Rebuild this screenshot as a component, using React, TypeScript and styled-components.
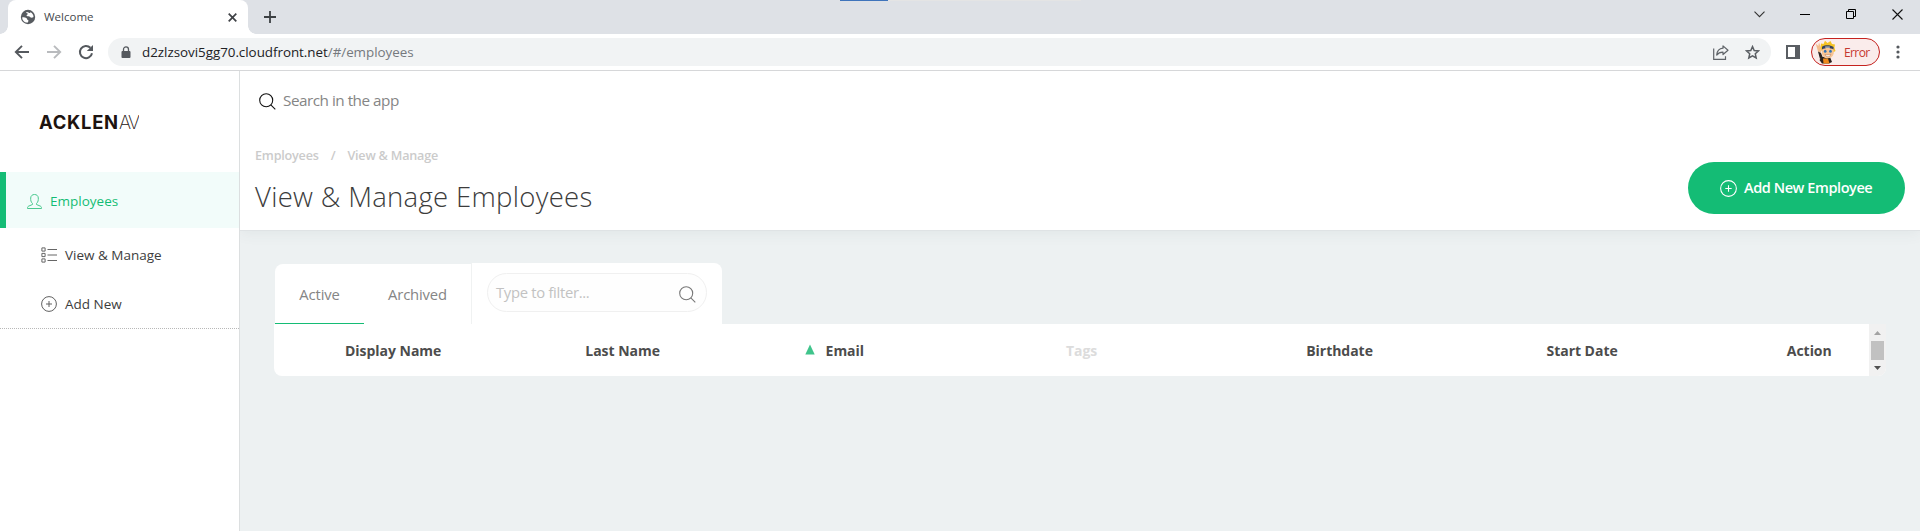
import React from 'react';
import styled, { createGlobalStyle } from 'styled-components';

const GlobalStyle = createGlobalStyle`
  *, *::before, *::after { box-sizing: border-box; }
  body {
    margin: 0;
    background: #fff;
    font-family: 'Open Sans', 'Noto Sans', sans-serif;
    overflow: hidden;
  }
  svg { display: block; flex: none; }
`;

const Window = styled.div`
  display: flex;
  flex-direction: column;
  height: 531px;
  width: 1920px;
`;

/* ---------- browser chrome ---------- */

const TabStrip = styled.div`
  display: flex;
  height: 34px;
  flex: none;
  background: #dee1e6;
  padding-left: 8px;
  position: relative;
`;

const LoadingBar = styled.div`
  position: absolute;
  top: 0;
  left: 840px;
  width: 241px;
  height: 1px;
  background: linear-gradient(to right, #3f74bb 48px, #e4e4e4 48px);
`;

const BrowserTab = styled.div`
  display: flex;
  align-items: center;
  width: 240px;
  padding: 0 11px 0 12px;
  background: #fff;
  border-radius: 8px 8px 0 0;
  position: relative;
  &::before,
  &::after {
    content: '';
    position: absolute;
    bottom: 0;
    width: 8px;
    height: 8px;
  }
  &::before {
    left: -8px;
    background: radial-gradient(circle at 0 0, transparent 7.5px, #fff 8px);
  }
  &::after {
    right: -8px;
    background: radial-gradient(circle at 100% 0, transparent 7.5px, #fff 8px);
  }
`;

const TabTitle = styled.span`
  flex: 1;
  margin-left: 8px;
  font-size: 11.5px;
  line-height: 16px;
  color: #45494d;
`;

const NewTab = styled.div`
  display: flex;
  align-items: center;
  margin-left: 16px;
`;

const WindowControls = styled.div`
  display: flex;
  align-items: flex-start;
  margin-left: auto;
`;

const WindowControl = styled.div`
  display: flex;
  width: 46px;
  height: 28px;
  align-items: center;
  justify-content: center;
`;

const Toolbar = styled.div`
  display: flex;
  align-items: center;
  height: 37px;
  flex: none;
  border-bottom: 1px solid #d6d7d9;
  padding: 0 16px 0 14px;
`;

const NavButtons = styled.div`
  display: flex;
  gap: 16px;
  width: 94px;
`;

const AddressBar = styled.div`
  display: flex;
  align-items: center;
  width: 1663px;
  height: 28px;
  padding: 0 11px 0 13px;
  border-radius: 14px;
  background: #f1f3f4;
`;

const Url = styled.span`
  flex: 1;
  margin-left: 11px;
  font-size: 13.4px;
  line-height: 20px;
  letter-spacing: -0.03px;
  color: #202124;
`;

const UrlPath = styled.span`
  color: #75797e;
`;

const AddressActions = styled.div`
  display: flex;
  gap: 16px;
  align-items: center;
`;

const SidePanelIcon = styled.div`
  width: 14px;
  height: 14px;
  margin-left: 15px;
  border: 2px solid #5a5e63;
  border-right-width: 5px;
`;

const Profile = styled.div`
  display: flex;
  align-items: center;
  width: 69px;
  height: 28px;
  margin-left: 11px;
  padding-left: 3px;
  border: 1px solid #c5221f;
  border-radius: 14px;
  background: #faeceb;
  font-size: 12px;
  letter-spacing: -0.6px;
  color: #c5382f;
`;

const ProfileLabel = styled.span`
  margin-left: 7px;
`;

const MoreMenu = styled.div`
  margin-left: 16px;
`;

/* ---------- application ---------- */

const Page = styled.div`
  display: flex;
  flex: 1;
  min-height: 0;
`;

const Sidebar = styled.aside`
  width: 240px;
  flex: none;
  background: #fff;
  border-right: 1px solid #dcdfe0;
`;

const Logo = styled.div`
  width: 139px;
  height: 101px;
  padding: 40px 0 0 39px;
  overflow: hidden;
  white-space: nowrap;
  font-family: 'Inter', sans-serif;
  font-size: 18.4px;
  line-height: 22px;
  font-weight: 700;
  color: #1d1310;
`;

const LogoBold = styled.span`
  letter-spacing: 0.75px;
`;

const LogoThin = styled.span`
  font-weight: 200;
  letter-spacing: -1.6px;
`;

const SectionItem = styled.div`
  display: flex;
  align-items: center;
  gap: 8px;
  height: 56px;
  padding: 3px 0 0 21px;
  border-left: 6px solid #14bc75;
  background: #f2fcfa;
  font-size: 13.5px;
  line-height: 20px;
  color: #14bc75;
`;

const SectionLabel = styled.span`
  padding-bottom: 2px;
`;

const SubMenu = styled.nav`
  display: flex;
  flex-direction: column;
  height: 101px;
  padding-top: 2px;
  border-bottom: 1px dotted #b8b8b8;
`;

const SubMenuItem = styled.div`
  display: flex;
  align-items: center;
  gap: 8px;
  height: 50px;
  padding-left: 41px;
  font-size: 13.5px;
  line-height: 20px;
  color: #3d3d3d;
`;

const Content = styled.main`
  flex: 1;
  display: flex;
  flex-direction: column;
  background: #edf1f2;
`;

const Header = styled.header`
  height: 160px;
  background: #fff;
  border-bottom: 1px solid #dfe3e5;
  box-shadow: 0 2px 14px rgba(60, 80, 85, 0.07);
  clip-path: inset(0 0 -20px 0);
`;

const AppSearch = styled.div`
  display: flex;
  align-items: center;
  height: 69px;
  padding: 0 0 9px 19px;
  gap: 7px;
  font-size: 15.3px;
  line-height: 20px;
  letter-spacing: -0.5px;
  color: #858585;
`;

const SearchPlaceholder = styled.span`
  padding-bottom: 3px;
`;

const TitleRow = styled.div`
  display: flex;
  justify-content: space-between;
  padding: 0 15px;
`;

const Breadcrumb = styled.div`
  display: flex;
  gap: 12px;
  padding-top: 6px;
  font-size: 12.6px;
  line-height: 20px;
  font-weight: 600;
  letter-spacing: -0.2px;
  color: #cbcbcb;
`;

const Title = styled.h1`
  margin: 11px 0 0;
  font-size: 27.5px;
  line-height: 40px;
  font-weight: 300;
  letter-spacing: 0.31px;
  color: #3c3c3c;
`;

const AddButton = styled.button`
  display: flex;
  align-items: center;
  gap: 7px;
  width: 217px;
  height: 52px;
  margin-top: 22px;
  padding: 0 0 0 32px;
  border: 0;
  border-radius: 26px;
  background: #14bc75;
  font: 600 14.5px/20px 'Open Sans', sans-serif;
  letter-spacing: -0.42px;
  white-space: nowrap;
  color: #fff;
`;

const ListPanel = styled.section`
  padding: 32px 34px 0 34px;
`;

const ListToolbar = styled.div`
  display: flex;
  height: 61px;
  align-items: flex-end;
  padding-left: 1px;
`;

const Tabs = styled.div`
  display: flex;
  width: 196px;
  height: 60px;
  background: #fff;
  border-radius: 8px 0 0 0;
`;

const Tab = styled.div<{ $active?: boolean; $width: number }>`
  width: ${(p) => p.$width}px;
  padding-top: 20px;
  border-bottom: 1px solid ${(p) => (p.$active ? '#14bc75' : 'transparent')};
  text-align: center;
  font-size: 14.8px;
  line-height: 20px;
  letter-spacing: -0.15px;
  color: #858585;
`;

const FilterArea = styled.div`
  width: 251px;
  height: 61px;
  padding: 10px 15px 0;
  border-left: 1px solid #f0f2f2;
  border-radius: 0 8px 0 0;
  background: #fff;
`;

const FilterBox = styled.div`
  display: flex;
  justify-content: space-between;
  width: 220px;
  height: 39px;
  padding: 0 10px 0 8px;
  border: 1px solid #f0f0f0;
  border-radius: 20px;
  background: #fefefe;
`;

const FilterText = styled.span`
  padding-top: 8px;
  font-size: 14.8px;
  line-height: 20px;
  letter-spacing: -0.3px;
  color: #c2c2c2;
`;

const FilterIcon = styled.span`
  padding-top: 12px;
`;

const TableFrame = styled.div`
  display: flex;
  width: 1612px;
  height: 52px;
  border-radius: 0 0 8px 8px;
  overflow: hidden;
  background: #fff;
`;

const TableHead = styled.div`
  display: grid;
  grid-template-columns: repeat(6, 240.3px) 1fr;
  align-items: center;
  flex: 1;
  padding: 2px 0 0 71px;
`;

const HeadCell = styled.div<{ $muted?: boolean }>`
  font-size: 14px;
  line-height: 20px;
  font-weight: 700;
  letter-spacing: -0.03px;
  color: ${(p) => (p.$muted ? '#dcdcdc' : '#4c4c4c')};
  position: relative;
`;

const SortMark = styled.span`
  position: absolute;
  left: -21px;
  top: 3px;
`;

const Scrollbar = styled.div`
  display: flex;
  flex-direction: column;
  align-items: center;
  width: 17px;
  padding: 7px 0 5px;
  background: #f1f1f1;
`;

const Thumb = styled.div`
  width: 13px;
  height: 19px;
  margin: 6px 0;
  background: #c1c1c1;
`;

/* ---------- icons ---------- */

const SearchIcon = ({ color }: { color: string }) => (
  <svg width="17" height="17" viewBox="0 0 17 17" fill="none" stroke={color} strokeWidth="1.1">
    <circle cx="7.2" cy="7.2" r="6.5" />
    <path d="M11.8 11.8 16.3 16.3" />
  </svg>
);

const PlusCircle = ({ size, color }: { size: number; color: string }) => (
  <svg width={size} height={size} viewBox="0 0 16 16" fill="none" stroke={color}>
    <circle cx="8" cy="8" r="7.4" />
    <path d="M8 5v6M5 8h6" />
  </svg>
);

const GlobeIcon = () => (
  <svg width="16" height="16" viewBox="0 0 16 16">
    <circle cx="8" cy="8" r="7.2" fill="#575b60" />
    <path
      d="M2.2 8.4c1.5-.2 3.3.3 4.4.9.8.5.3 1.5 1.3 1.7.9.2.5 1.3 0 2.4-3.3.4-5.7-2-5.700-5ZM6.4 3c-.4 1 .4 1.300 1.200 1.500.6.3-.1 1.200-1 1.600-.3.9.6 1.200 1.800 1.200 1.600-.1 1.700 1.300 3.100 1.400.9 0 1.500-.5 2-.7.1-2-1.200-3.900-3-4.700-.3 1-1.500.9-1.900.2-.8-.5-1.500-.7-2.200-.5Z"
      fill="#fff"
    />
  </svg>
);

const Avatar = () => (
  <svg width="22" height="24" viewBox="0 0 22 24">
    <path d="M7 17h8l2 5-3 1.5H7L4.5 20Z" fill="#2b2320" />
    <path d="M8 18.5h5l1.500 5H8.500Z" fill="#ee8a1d" />
    <path d="M2 8 .7 3.500 3.300 6 4 2.500l1.500 4 1 4-1 2.500-2.500-1.500Z" fill="#f4bd8c" />
    <path d="M3 11.500 6 13l2 5-3 1Z" fill="#2b2320" />
    <path d="m5.500 8 .5-4.500L8.500 4 10 .7 12.500 3 15.500.9 17 4l3 .5-.6 3 1.100 3.500-2.500 1.500H7.500Z" fill="#f5c324" />
    <path d="M7 9c3-3 9-3 11.500-.5l.3 5c-1 3.500-3.500 4.800-6 4.800C9 18.300 7 16 6.800 13Z" fill="#f7c596" />
    <path d="M7 6.700c3.500-2 8-2 11.500.3v2.500C15 7.500 10.500 7.500 7 9.500Z" fill="#34405c" />
    <path d="M10.200 6.400h4.600v1.400h-4.600Z" fill="#b9c0ca" />
    <ellipse cx="10.2" cy="11.3" rx="1.3" ry="1.5" fill="#3173b8" />
    <ellipse cx="15.5" cy="11.3" rx="1.3" ry="1.5" fill="#3173b8" />
    <path d="M10 14.500c2 .6 4 .5 5.800-.3-.4 3-4.500 3.600-5.800.3Z" fill="#fff" stroke="#9c5130" strokeWidth=".4" />
  </svg>
);

const columns = ['Display Name', 'Last Name', 'Email', 'Tags', 'Birthdate', 'Start Date', 'Action'];

export default function App() {
  return (
    <Window>
      <GlobalStyle />
      <TabStrip>
        <LoadingBar />
        <BrowserTab>
          <GlobeIcon />
          <TabTitle>Welcome</TabTitle>
          <svg width="9" height="9" viewBox="0 0 9 9" stroke="#3f4246" strokeWidth="1.7">
            <path d="m.7.7 7.6 7.6M8.3.7.7 8.3" />
          </svg>
        </BrowserTab>
        <NewTab>
          <svg width="12" height="12" viewBox="0 0 12 12" stroke="#3c4043" strokeWidth="1.8">
            <path d="M6 0v12M0 6h12" />
          </svg>
        </NewTab>
        <WindowControls>
          <WindowControl>
            <svg width="11" height="7" viewBox="0 0 11 7" fill="none" stroke="#333" strokeWidth="1.1">
              <path d="m.5.7 5 5 5-5" />
            </svg>
          </WindowControl>
          <WindowControl>
            <svg width="10" height="1" viewBox="0 0 10 1">
              <path d="M0 0h10v1H0Z" />
            </svg>
          </WindowControl>
          <WindowControl>
            <svg width="10" height="10" viewBox="0 0 10 10" fill="none" stroke="#000">
              <path d="M.5 2.5h7v7h-7ZM2.5 2.5v-2h7v7h-2" />
            </svg>
          </WindowControl>
          <WindowControl>
            <svg width="11" height="11" viewBox="0 0 11 11" stroke="#111" strokeWidth="1.1">
              <path d="m.5.5 10 10M10.5.5l-10 10" />
            </svg>
          </WindowControl>
        </WindowControls>
      </TabStrip>

      <Toolbar>
        <NavButtons>
          <svg width="16" height="16" viewBox="0 0 16 16" fill="none" stroke="#55595e" strokeWidth="1.9">
            <path d="M15 8H2.5M8 1.800 1.800 8 8 14.200" />
          </svg>
          <svg width="16" height="16" viewBox="0 0 16 16" fill="none" stroke="#b9bbbe" strokeWidth="1.9">
            <path d="M1 8h12.5M8 1.800 14.200 8 8 14.200" />
          </svg>
          <svg width="16" height="16" viewBox="0 0 16 16" fill="none" stroke="#55595e" strokeWidth="2">
            <path d="M14 9.2A6.100 6.100 0 1 1 12.400 3.800" />
            <path d="M15 .9v6.200H8.800Z" fill="#55595e" stroke="none" />
          </svg>
        </NavButtons>
        <AddressBar>
          <svg width="10" height="13" viewBox="0 0 10 13">
            <rect x=".5" y="5" width="9" height="7" rx=".9" fill="#55595e" />
            <path d="M2.5 5V3.4a2.5 2.500 0 0 1 5 0V5" fill="none" stroke="#55595e" strokeWidth="1.3" />
          </svg>
          <Url>
            d2zlzsovi5gg70.cloudfront.net<UrlPath>/#/employees</UrlPath>
          </Url>
          <AddressActions>
            <svg width="16" height="15" viewBox="0 0 16 15" fill="none" stroke="#5f6368" strokeWidth="1.2">
              <path d="M.7 3.5v10.8h11.800v-3" />
              <path d="M10 .9 15 5.200 10 9.500V7.200c-3 0-4.800.8-6.300 2.900C4 6.500 6 3.600 10 3.200Z" strokeLinejoin="round" />
            </svg>
            <svg width="15" height="15" viewBox="0 0 15 15" fill="none" stroke="#5a5e63" strokeWidth="1.5">
              <path d="m7.500 1.600 1.700 3.900 4.300.4-3.200 2.900.9 4.200-3.700-2.200L3.800 13l.9-4.200L1.500 5.900l4.300-.4Z" />
            </svg>
          </AddressActions>
        </AddressBar>
        <SidePanelIcon />
        <Profile>
          <Avatar />
          <ProfileLabel>Error</ProfileLabel>
        </Profile>
        <MoreMenu>
          <svg width="4" height="14" viewBox="0 0 4 14" fill="#55595e">
            <circle cx="2" cy="2" r="1.6" />
            <circle cx="2" cy="7" r="1.6" />
            <circle cx="2" cy="12" r="1.6" />
          </svg>
        </MoreMenu>
      </Toolbar>

      <Page>
        <Sidebar>
          <Logo>
            <LogoBold>ACKLEN</LogoBold>
            <LogoThin>AV</LogoThin>
          </Logo>
          <SectionItem>
            <svg width="15" height="15" viewBox="0 0 15 15" fill="none" stroke="#4bc98f">
              <path d="M5.500 9.500C3.800 8 3.600 6 3.700 4 3.800 1.800 5.300.5 7.500.5s3.700 1.300 3.800 3.500c.1 2-.1 4-1.800 5.500v1l4 1.700c.8.4 1 1 1 2.300H.5c0-1.300.2-1.900 1-2.300l4-1.700Z" />
            </svg>
            <SectionLabel>Employees</SectionLabel>
          </SectionItem>
          <SubMenu>
            <SubMenuItem>
              <svg width="16" height="16" viewBox="0 0 16 16" fill="none" stroke="#666">
                <path d="M.9.9h3.200v3.200H.9ZM.9 6.400h3.200v3.200H.9ZM.9 11.900h3.200v3.200H.9Z" />
                <path d="M6.500 2.500H16M6.500 8H16M6.500 13.500H16" />
              </svg>
              View &amp; Manage
            </SubMenuItem>
            <SubMenuItem>
              <PlusCircle size={16} color="#606060" />
              Add New
            </SubMenuItem>
          </SubMenu>
        </Sidebar>

        <Content>
          <Header>
            <AppSearch>
              <SearchIcon color="#111" />
              <SearchPlaceholder>Search in the app</SearchPlaceholder>
            </AppSearch>
            <TitleRow>
              <div>
                <Breadcrumb>
                  <span>Employees</span>
                  <span>/</span>
                  <span>View &amp; Manage</span>
                </Breadcrumb>
                <Title>View &amp; Manage Employees</Title>
              </div>
              <AddButton>
                <PlusCircle size={17} color="#fff" />
                Add New Employee
              </AddButton>
            </TitleRow>
          </Header>
          <ListPanel>
            <ListToolbar>
              <Tabs>
                <Tab $active $width={89}>Active</Tab>
                <Tab $width={107}>Archived</Tab>
              </Tabs>
              <FilterArea>
                <FilterBox>
                  <FilterText>Type to filter...</FilterText>
                  <FilterIcon>
                    <SearchIcon color="#777" />
                  </FilterIcon>
                </FilterBox>
              </FilterArea>
            </ListToolbar>
            <TableFrame>
              <TableHead>
                {columns.map((name) => (
                  <HeadCell key={name} $muted={name === 'Tags'}>
                    {name === 'Email' && (
                      <SortMark>
                        <svg width="10" height="11" viewBox="0 0 10 11">
                          <path d="M5 .5 9.700 10.500H.3Z" fill="#3fc48b" />
                        </svg>
                      </SortMark>
                    )}
                    {name}
                  </HeadCell>
                ))}
              </TableHead>
              <Scrollbar>
                <svg width="7" height="4" viewBox="0 0 7 4">
                  <path d="M3.500 0 7 4H0Z" fill="#a3a3a3" />
                </svg>
                <Thumb />
                <svg width="7" height="4" viewBox="0 0 7 4">
                  <path d="M0 0h7L3.500 4Z" fill="#505050" />
                </svg>
              </Scrollbar>
            </TableFrame>
          </ListPanel>
        </Content>
      </Page>
    </Window>
  );
}
